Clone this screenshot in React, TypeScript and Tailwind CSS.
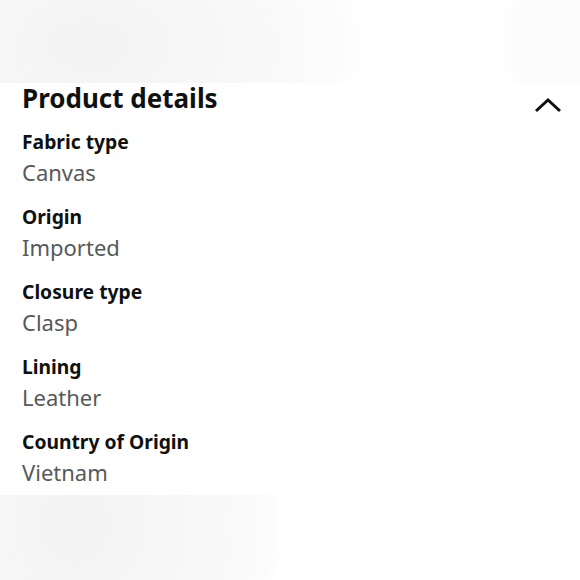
const details = [
  { label: "Fabric type", value: "Canvas" },
  { label: "Origin", value: "Imported" },
  { label: "Closure type", value: "Clasp" },
  { label: "Lining", value: "Leather" },
  { label: "Country of Origin", value: "Vietnam" },
];

export default function App() {
  return (
    <div className="w-[580px] h-[580px] bg-white flex flex-col overflow-hidden font-['Noto_Sans',sans-serif]">
      <div className="h-[83px] shrink-0 bg-[radial-gradient(ellipse_280px_170px_at_90px_45px,#f3f3f3_0%,#f8f8f8_55%,#fcfcfc_90%,#ffffff_100%),radial-gradient(ellipse_100px_140px_at_600px_40px,#fbfbfb_0%,#fcfcfc_85%,#ffffff_100%)] bg-blend-darken" />
      <div className="px-[22px] pb-[6px]">
        <div className="flex items-center justify-between">
          <h2 className="text-[26px] font-bold text-[#0f1111] leading-[28px]">Product details</h2>
          <svg width="28" height="16" viewBox="0 0 28 16" className="mr-[-4px] mt-[14px]">
            <path d="M2 14 L14 3 L26 14" fill="none" stroke="#0f1111" strokeWidth="3" />
          </svg>
        </div>
        <div className="mt-[16px] flex flex-col gap-[15px]">
          {details.map((d) => (
            <div key={d.label} className="flex flex-col">
              <span className="text-[19.3px] font-bold text-[#0f1111] leading-[26px]">{d.label}</span>
              <span className="text-[22px] text-[#565959] leading-[34px]">{d.value}</span>
            </div>
          ))}
        </div>
      </div>
      <div className="flex-1 bg-[radial-gradient(ellipse_210px_230px_at_75px_30px,#f3f3f3_0%,#f7f7f7_50%,#fbfbfb_92%,#ffffff_100%)]" />
    </div>
  );
}
